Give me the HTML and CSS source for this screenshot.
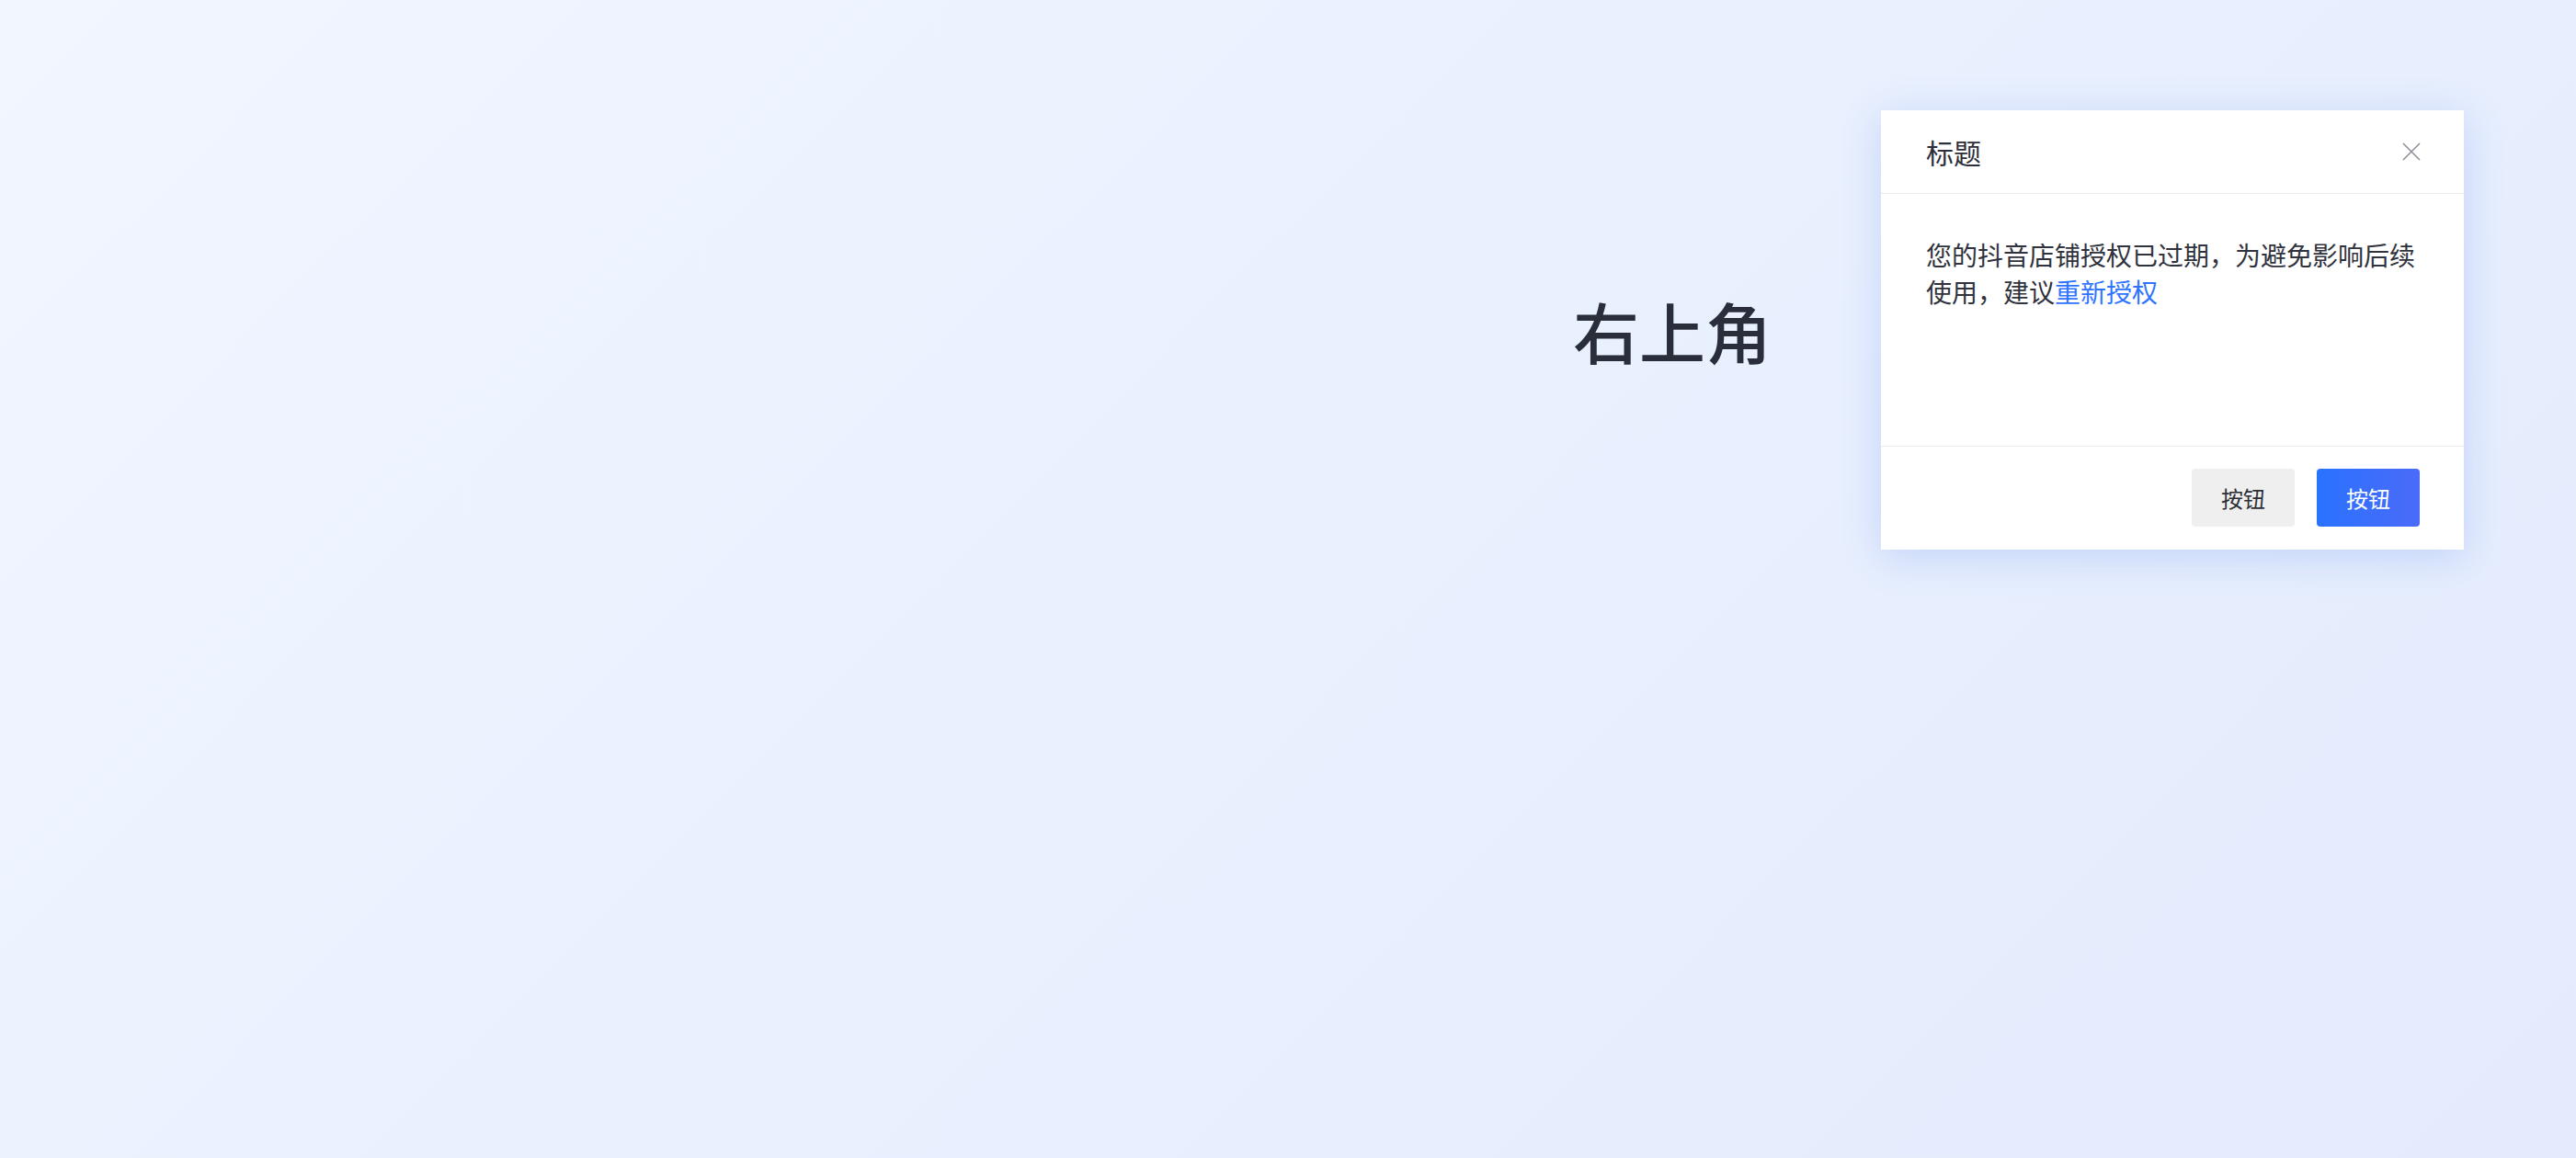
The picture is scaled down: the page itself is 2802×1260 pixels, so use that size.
FILE: index.html
```html
<!DOCTYPE html>
<html lang="zh-CN">
<head>
    <meta charset="UTF-8">
    <meta name="viewport" content="width=device-width, initial-scale=1.0">
    <title>右上角</title>
    <link rel="stylesheet" href="styles.css">
</head>
<body>
    <div class="trang">
        <h1 class="vi-tri">右上角</h1>

        <!-- hộp thoại ở góc phải trên -->
        <div class="hop-thoai">
            <div class="hop-thoai-dau">
                <span class="tieu-de">标题</span>
                <button class="nut-dong" aria-label="关闭">
                    <svg width="20" height="20" viewBox="0 0 20 20">
                        <path d="M1 1 L19 19 M19 1 L1 19" stroke="#8e909a" stroke-width="1.6" fill="none"/>
                    </svg>
                </button>
            </div>
            <div class="hop-thoai-than">
                您的抖音店铺授权已过期，为避免影响后续使用，建议<a href="#" class="lien-ket">重新授权</a>
            </div>
            <div class="hop-thoai-chan">
                <button class="nut nut-phu">按钮</button>
                <button class="nut nut-chinh">按钮</button>
            </div>
        </div>
    </div>
</body>
</html>
```

FILE: styles.css
```css
*{
    box-sizing: border-box;
    padding: 0;
    margin: 0;
}

body{
    font-family: "Noto Sans CJK SC", "Noto Sans", sans-serif;
    color: #2c2f3a;
    overflow: hidden;
}

.trang{
    position: relative;
    width: 100%;
    height: 100vh;
    background: linear-gradient(135deg, #f1f6ff 0%, #e9f0fe 50%, #e3ebfd 100%);
    padding: 323px 0 0 1711px;
}

.vi-tri{
    font-size: 72px;
    line-height: 72px;
    font-weight: 500;
    color: #2a2e3b;
}

.hop-thoai{
    position: absolute;
    top: 120px;
    right: 122px;
    width: 634px;
    background: #fff;
    box-shadow: 0 8px 40px rgba(70, 118, 232, 0.22);
}

.hop-thoai-dau{
    height: 91px;
    display: flex;
    align-items: center;
    justify-content: space-between;
    padding: 0 47px 0 49px;
    border-bottom: 1px solid #ececec;
}

.tieu-de{
    font-size: 30px;
    color: #2c2f3a;
}

.nut-dong{
    border: none;
    background: none;
    width: 20px;
    height: 20px;
    display: flex;
    cursor: pointer;
}

.hop-thoai-than{
    height: 275px;
    padding: 46px 48px 0 49px;
    font-size: 28px;
    line-height: 40px;
    color: #30333d;
    border-bottom: 1px solid #ececec;
}

.lien-ket{
    color: #2f74ff;
    text-decoration: none;
}

.hop-thoai-chan{
    display: flex;
    justify-content: flex-end;
    gap: 24px;
    padding: 24px 48px 25px;
}

.nut{
    width: 112px;
    height: 63px;
    border: none;
    border-radius: 4px;
    font-family: inherit;
    font-size: 24px;
    cursor: pointer;
}

.nut-phu{
    background: #efefef;
    color: #2d2f36;
}

.nut-chinh{
    background: linear-gradient(90deg, #2a72ff, #4a6bf8);
    color: #fff;
}
```
